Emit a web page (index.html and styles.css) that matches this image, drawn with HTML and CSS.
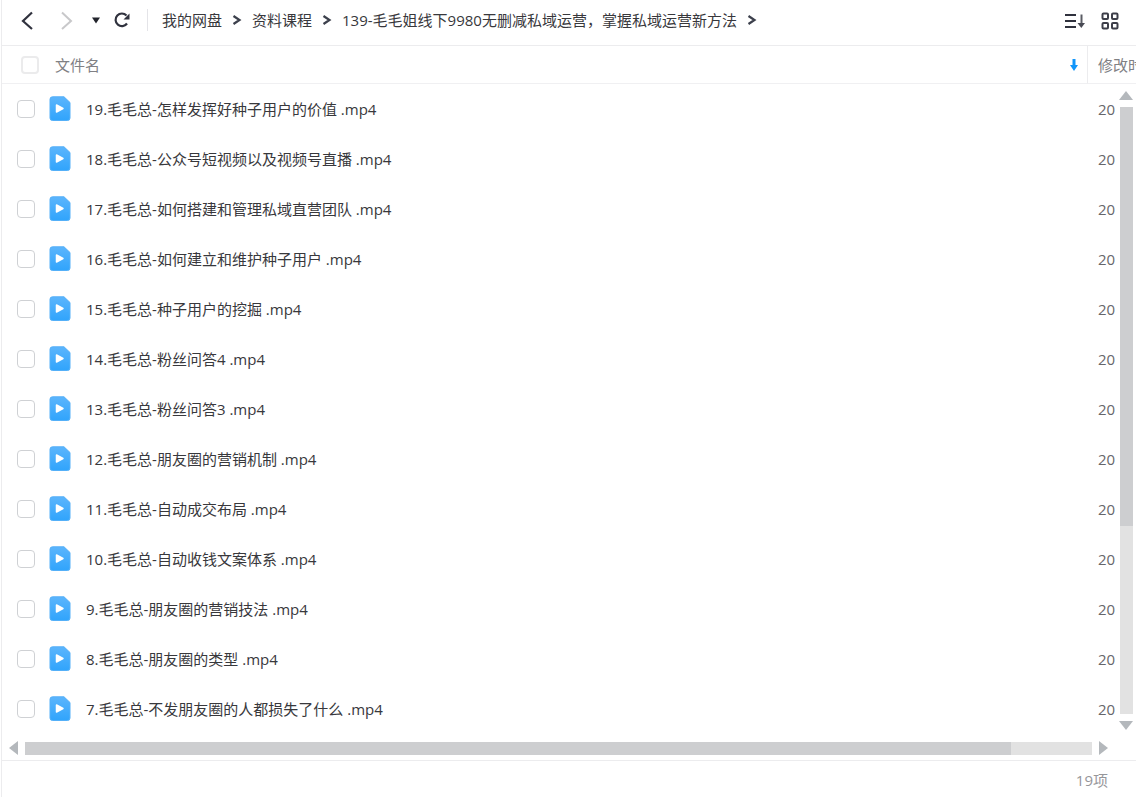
FILE: index.html
```html
<!DOCTYPE html>
<html lang="zh-CN">
<head>
<meta charset="utf-8">
<title>我的网盘</title>
<link rel="stylesheet" href="styles.css">
</head>
<body>
<svg class="defs" aria-hidden="true">
  <defs>
    <linearGradient id="file-fill" x1="0" y1="0" x2="0" y2="1"><stop offset="0" stop-color="#5cb5fc"/><stop offset="1" stop-color="#30a4fc"/></linearGradient>
    <symbol id="video" viewBox="0 0 22 26">
      <path d="M3.500 .8H15L21 6.500V22a2.500 2.500 0 0 1-2.500 2.500H3.500A2.500 2.500 0 0 1 1 22V3.300A2.500 2.500 0 0 1 3.500 .8z" fill="url(#file-fill)" stroke="#54b0f8" stroke-width="1" stroke-linejoin="round"/>
      <path d="M7.500 9v7l6.500-3.500z" fill="#fff" stroke="#fff" stroke-width="1.500" stroke-linejoin="round"/>
    </symbol>
    <symbol id="crumb" viewBox="0 0 10 12"><path d="M1.500 2l6 4-6 4" fill="none" stroke="#3c404c" stroke-width="2.200"/></symbol>
  </defs>
</svg>
<div class="app">
  <header class="toolbar">
    <button class="tool back" aria-label="后退"><svg width="14" height="20" viewBox="0 0 14 20"><path d="M12 2.500L3 11l9 8" fill="none" stroke="#30323e" stroke-width="2.200"/></svg></button>
    <button class="tool forward" aria-label="前进"><svg width="14" height="20" viewBox="0 0 14 20"><path d="M2 2.500l9 8.500-9 8" fill="none" stroke="#c8c8ca" stroke-width="2"/></svg></button>
    <button class="tool history" aria-label="历史记录"><svg width="8" height="8" viewBox="0 0 8 8"><path d="M0 1.500h8L4 7.500z" fill="#22242c"/></svg></button>
    <button class="tool refresh" aria-label="刷新"><svg width="18" height="18" viewBox="0 0 18 18"><path d="M14 12.500A6.300 6.300 0 1 1 13.500 4.500" fill="none" stroke="#30323e" stroke-width="2.200"/><path d="M16.500 2.500v6h-6z" fill="#30323e"/></svg></button>
    <span class="divider"></span>
    <nav class="crumbs" aria-label="路径">
      <a href="#">我的网盘</a><svg class="sep"><use href="#crumb"/></svg>
      <a href="#">资料课程</a><svg class="sep"><use href="#crumb"/></svg>
      <a href="#">139-毛毛姐线下9980无删减私域运营，掌握私域运营新方法</a><svg class="sep"><use href="#crumb"/></svg>
    </nav>
    <button class="tool sort" aria-label="排序"><svg width="20" height="18" viewBox="0 0 20 18"><path d="M0 4h11M0 10h11M0 16h11" stroke="#30323e" stroke-width="2"/><path d="M16.500 3.500v9" stroke="#5a5c64" stroke-width="2"/><path d="M12.500 12h7.500l-3.700 5z" fill="#484a54"/></svg></button>
    <button class="tool" aria-label="网格视图"><svg width="18" height="20" viewBox="0 -2 18 20" fill="none" stroke="#3c3e48" stroke-width="2"><rect x="1.500" y="1.500" width="5.500" height="5.500" rx="1"/><rect x="11" y="1.500" width="5.500" height="5.500" rx="1"/><rect x="1.500" y="11" width="5.500" height="5.500" rx="1"/><rect x="11" y="11" width="5.500" height="5.500" rx="1"/></svg></button>
  </header>
  <main class="list">
    <table>
      <colgroup><col class="col-check"><col><col class="col-date"></colgroup>
      <thead>
        <tr>
          <th colspan="2"><div class="head"><input type="checkbox" aria-label="全选"><span>文件名</span><svg class="order" width="8" height="12" viewBox="0 0 8 12"><path d="M2.500 0h3v6H8L4 12 0 6h2.500z" fill="#1296fa"/></svg></div></th>
          <th class="date">修改时间</th>
        </tr>
      </thead>
      <tbody>
        <tr><td><input type="checkbox" id="f19"></td><td><label for="f19"><svg class="icon"><use href="#video"/></svg>19.毛毛总-怎样发挥好种子用户的价值 .mp4</label></td><td class="date">20</td></tr>
        <tr><td><input type="checkbox" id="f18"></td><td><label for="f18"><svg class="icon"><use href="#video"/></svg>18.毛毛总-公众号短视频以及视频号直播 .mp4</label></td><td class="date">20</td></tr>
        <tr><td><input type="checkbox" id="f17"></td><td><label for="f17"><svg class="icon"><use href="#video"/></svg>17.毛毛总-如何搭建和管理私域直营团队 .mp4</label></td><td class="date">20</td></tr>
        <tr><td><input type="checkbox" id="f16"></td><td><label for="f16"><svg class="icon"><use href="#video"/></svg>16.毛毛总-如何建立和维护种子用户 .mp4</label></td><td class="date">20</td></tr>
        <tr><td><input type="checkbox" id="f15"></td><td><label for="f15"><svg class="icon"><use href="#video"/></svg>15.毛毛总-种子用户的挖掘 .mp4</label></td><td class="date">20</td></tr>
        <tr><td><input type="checkbox" id="f14"></td><td><label for="f14"><svg class="icon"><use href="#video"/></svg>14.毛毛总-粉丝问答4 .mp4</label></td><td class="date">20</td></tr>
        <tr><td><input type="checkbox" id="f13"></td><td><label for="f13"><svg class="icon"><use href="#video"/></svg>13.毛毛总-粉丝问答3 .mp4</label></td><td class="date">20</td></tr>
        <tr><td><input type="checkbox" id="f12"></td><td><label for="f12"><svg class="icon"><use href="#video"/></svg>12.毛毛总-朋友圈的营销机制 .mp4</label></td><td class="date">20</td></tr>
        <tr><td><input type="checkbox" id="f11"></td><td><label for="f11"><svg class="icon"><use href="#video"/></svg>11.毛毛总-自动成交布局 .mp4</label></td><td class="date">20</td></tr>
        <tr><td><input type="checkbox" id="f10"></td><td><label for="f10"><svg class="icon"><use href="#video"/></svg>10.毛毛总-自动收钱文案体系 .mp4</label></td><td class="date">20</td></tr>
        <tr><td><input type="checkbox" id="f9"></td><td><label for="f9"><svg class="icon"><use href="#video"/></svg>9.毛毛总-朋友圈的营销技法 .mp4</label></td><td class="date">20</td></tr>
        <tr><td><input type="checkbox" id="f8"></td><td><label for="f8"><svg class="icon"><use href="#video"/></svg>8.毛毛总-朋友圈的类型 .mp4</label></td><td class="date">20</td></tr>
        <tr><td><input type="checkbox" id="f7"></td><td><label for="f7"><svg class="icon"><use href="#video"/></svg>7.毛毛总-不发朋友圈的人都损失了什么 .mp4</label></td><td class="date">20</td></tr>
      </tbody>
    </table>
    <div class="vscroll">
      <svg width="14" height="9" viewBox="0 0 14 9"><path d="M7 0l7 9H0z" fill="#b4b8bc"/></svg>
      <div class="track"><div class="thumb"></div></div>
      <svg width="14" height="9" viewBox="0 0 14 9"><path d="M0 0h14L7 9z" fill="#b4b8bc"/></svg>
    </div>
  </main>
  <div class="hscroll">
    <svg width="9" height="14" viewBox="0 0 9 14"><path d="M9 0v14L0 7z" fill="#b4b8bc"/></svg>
    <div class="track"><div class="thumb"></div></div>
    <svg width="9" height="14" viewBox="0 0 9 14"><path d="M0 0l9 7-9 7z" fill="#b4b8bc"/></svg>
  </div>
  <footer class="status">19项</footer>
</div>
</body>
</html>
```
FILE: styles.css
```css
* { box-sizing: border-box; }
body {
  margin: 0;
  background: #fff;
  color: #38383c;
  font: 15px/20px "Open Sans", "Noto Sans CJK SC", sans-serif;
}
.defs { position: absolute; width: 0; height: 0; }
.app {
  display: flex;
  flex-direction: column;
  min-height: 100vh;
  margin-left: 1px;
  border-left: 1px solid #ececee;
  overflow: hidden;
}
.toolbar {
  display: flex;
  align-items: center;
  height: 46px;
  padding: 0 17px 5px 18px;
  border-bottom: 1px solid #ececee;
}
.tool {
  display: flex;
  padding: 0;
  border: 0;
  background: none;
}
.back { margin-right: 26px; }
.forward { margin-right: 18px; }
.history { margin-right: 13px; }
.refresh { margin-right: 16px; }
.sort { margin: 0 16px 0 auto; }
.divider { width: 1px; height: 22px; margin-right: 14px; background: #e4e4e8; }
.crumbs { display: flex; align-items: center; gap: 10px; white-space: nowrap; }
.crumbs a { color: inherit; text-decoration: none; }
.sep { width: 10px; height: 12px; }
.list { position: relative; flex: 1; }
table { width: 100%; table-layout: fixed; border-collapse: separate; border-spacing: 0; }
.col-check { width: 47px; }
.col-date { width: 49px; }
th, td { padding: 0; text-align: left; font-weight: 400; }
th { height: 38px; border-bottom: 1px solid #f0f0f2; color: #808084; }
td { height: 50px; }
.head { display: flex; align-items: center; padding: 0 9px 0 19px; }
.head span { margin-left: 16px; }
.order { margin-left: auto; }
td:first-child { padding-left: 15px; }
.date { padding-left: 10px; overflow: hidden; white-space: nowrap; color: #66666a; }
th.date { border-left: 1px solid #ececee; color: #808084; }
td.date { padding-left: 11px; }
input {
  display: block;
  appearance: none;
  width: 18px;
  height: 18px;
  margin: 0;
  border: 1px solid #cfd1d4;
  border-radius: 4px;
  background: #fff;
}
th input { border: 2px solid #ebebec; }
label { display: flex; align-items: center; white-space: nowrap; }
.icon { width: 22px; height: 26px; margin-right: 15px; }
.vscroll {
  position: absolute;
  top: 45px;
  right: 3px;
  bottom: 4px;
  display: flex;
  flex-direction: column;
  align-items: center;
  gap: 7px;
  width: 14px;
}
.track { flex: 1; background: #e2e2e2; }
.thumb { background: #cdced0; }
.vscroll .track { width: 13px; }
.vscroll .thumb { height: 69%; }
.hscroll {
  display: flex;
  align-items: center;
  gap: 7px;
  height: 26px;
  padding: 2px 28px 0 7px;
}
.hscroll .track { height: 13px; }
.hscroll .thumb { width: 92.4%; height: 100%; }
.status {
  height: 37px;
  padding: 9px 28px 0 0;
  border-top: 1px solid #ececee;
  color: #96969a;
  text-align: right;
}
```
